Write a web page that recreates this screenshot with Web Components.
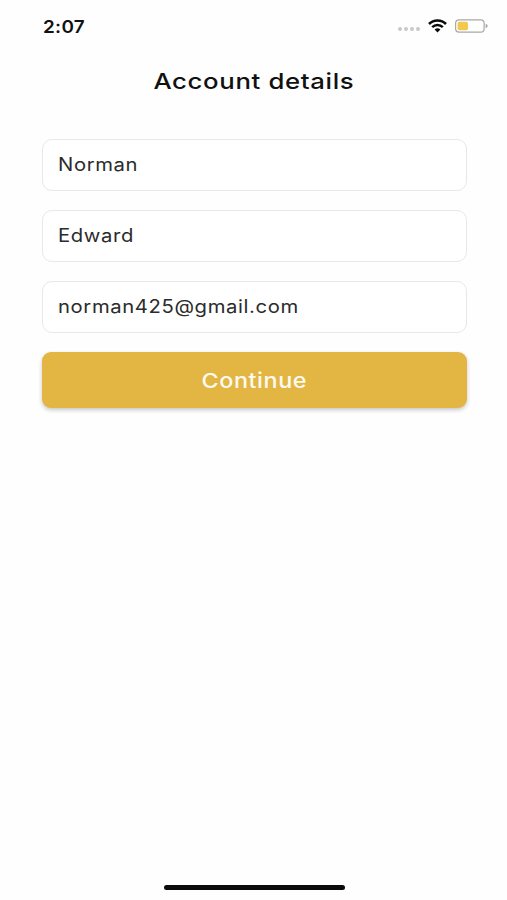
<!DOCTYPE html>
<html>
<head>
<meta charset="utf-8">
<title>Account details</title>
<style>
  html, body { margin: 0; height: 100%; background: #fefefe; }
  body { font-family: Inter, "Liberation Sans", sans-serif; }
</style>
</head>
<body>
<account-screen>
  <status-bar time="2:07"></status-bar>
  <h-title>Account details</h-title>
  <text-row>Norman</text-row>
  <text-row>Edward</text-row>
  <text-row>norman425@gmail.com</text-row>
  <gold-button>Continue</gold-button>
</account-screen>
<script>
class AccountScreen extends HTMLElement {
  constructor() {
    super();
    this.attachShadow({ mode: 'open' });
    this.shadowRoot.innerHTML = `
      <style>
        :host { display: flex; flex-direction: column; height: 900px; box-sizing: border-box; overflow: hidden; }
        .form { display: flex; flex-direction: column; gap: 19px; padding: 0 40.5px 0 41.5px; }
        .spacer { flex: 1; }
        .home { align-self: center; width: 181px; height: 5px; border-radius: 3px; background: #0b0b0b; margin: 0 0 10px 1px; }
      </style>
      <slot name="top"></slot>
      <div class="form"><slot></slot></div>
      <div class="spacer"></div>
      <div class="home"></div>
    `;
  }
}

class StatusBar extends HTMLElement {
  constructor() {
    super();
    this.attachShadow({ mode: 'open' });
  }

  connectedCallback() {
    this.slot = 'top';
    this.shadowRoot.innerHTML = `
      <style>
        :host { display: flex; align-items: center; height: 52px; padding: 0 19px 0 43px; color: #111; }
        .time { font-size: 17.5px; font-weight: 600; letter-spacing: 0.3px; flex: 1; margin-top: 1px; }
        .time span { display: inline-block; transform: scaleX(1.08); transform-origin: left; }
        .icons { display: flex; align-items: center; gap: 8px; }
        .dots { display: flex; gap: 2px; margin-top: 6px; }
        .dots i { width: 4px; height: 4px; border-radius: 50%; background: #c9c9c9; }
        svg { display: block; }
      </style>
      <div class="time"><span>${this.getAttribute('time')}</span></div>
      <div class="icons">
        <div class="dots"><i></i><i></i><i></i><i></i></div>
        <svg width="19" height="14" viewBox="0 0 19 14">
          <path d="M1 5 A12 12 0 0 1 18 5" fill="none" stroke="#0b0b0b" stroke-width="2.6"/>
          <path d="M4.2 8.2 A7.6 7.6 0 0 1 14.8 8.2" fill="none" stroke="#0b0b0b" stroke-width="2.5"/>
          <path d="M9.5 13.6 L6.6 10.6 A4.2 4.2 0 0 1 12.4 10.6 Z" fill="#0b0b0b"/>
        </svg>
        <svg width="33" height="14" viewBox="0 0 33 14">
          <rect x="0.6" y="0.8" width="28.5" height="12.4" rx="3.4" fill="#fff" stroke="#a8a8a8" stroke-width="1.2"/>
          <rect x="2.6" y="2.8" width="10.4" height="8.4" rx="1.6" fill="#f2c94f"/>
          <path d="M30.6 4.8 C32 5.2 32.6 6 32.6 7 C32.6 8 32 8.8 30.6 9.2 Z" fill="#a8a8a8"/>
        </svg>
      </div>
    `;
  }
}

class HTitle extends HTMLElement {
  constructor() {
    super();
    this.attachShadow({ mode: 'open' });
    this.shadowRoot.innerHTML = `
      <style>
        :host { display: block; text-align: center; font-size: 22px; font-weight: 500; letter-spacing: 0.55px; line-height: 30px; color: #111; padding: 14px 0 43px; }
        span { display: inline-block; transform: scaleX(1.17); }
      </style>
      <span><slot></slot></span>
    `;
  }

  connectedCallback() {
    this.slot = 'top';
  }
}

class TextRow extends HTMLElement {
  constructor() {
    super();
    this.attachShadow({ mode: 'open' });
    this.shadowRoot.innerHTML = `
      <style>
        :host { display: flex; align-items: center; box-sizing: border-box; height: 52px; padding: 0 15px 1px; background: #fff; border: 1px solid #e8e8e8; border-radius: 10px; font-size: 18px; letter-spacing: 0.55px; color: #2b2b2b; }
        span { display: inline-block; transform: scaleX(1.125); transform-origin: left; }
      </style>
      <span><slot></slot></span>
    `;
  }
}

class GoldButton extends HTMLElement {
  constructor() {
    super();
    this.attachShadow({ mode: 'open' });
    this.shadowRoot.innerHTML = `
      <style>
        :host { display: flex; align-items: center; justify-content: center; height: 56px; background: #e3b542; border-radius: 9px; box-shadow: 0 2px 4px rgba(0,0,0,0.22); color: #fdfaf0; font-size: 20.5px; font-weight: 500; letter-spacing: 0.5px; }
        span { display: inline-block; transform: scaleX(1.14); }
      </style>
      <span><slot></slot></span>
    `;
  }
}

customElements.define('account-screen', AccountScreen);
customElements.define('status-bar', StatusBar);
customElements.define('h-title', HTitle);
customElements.define('text-row', TextRow);
customElements.define('gold-button', GoldButton);
</script>
</body>
</html>
